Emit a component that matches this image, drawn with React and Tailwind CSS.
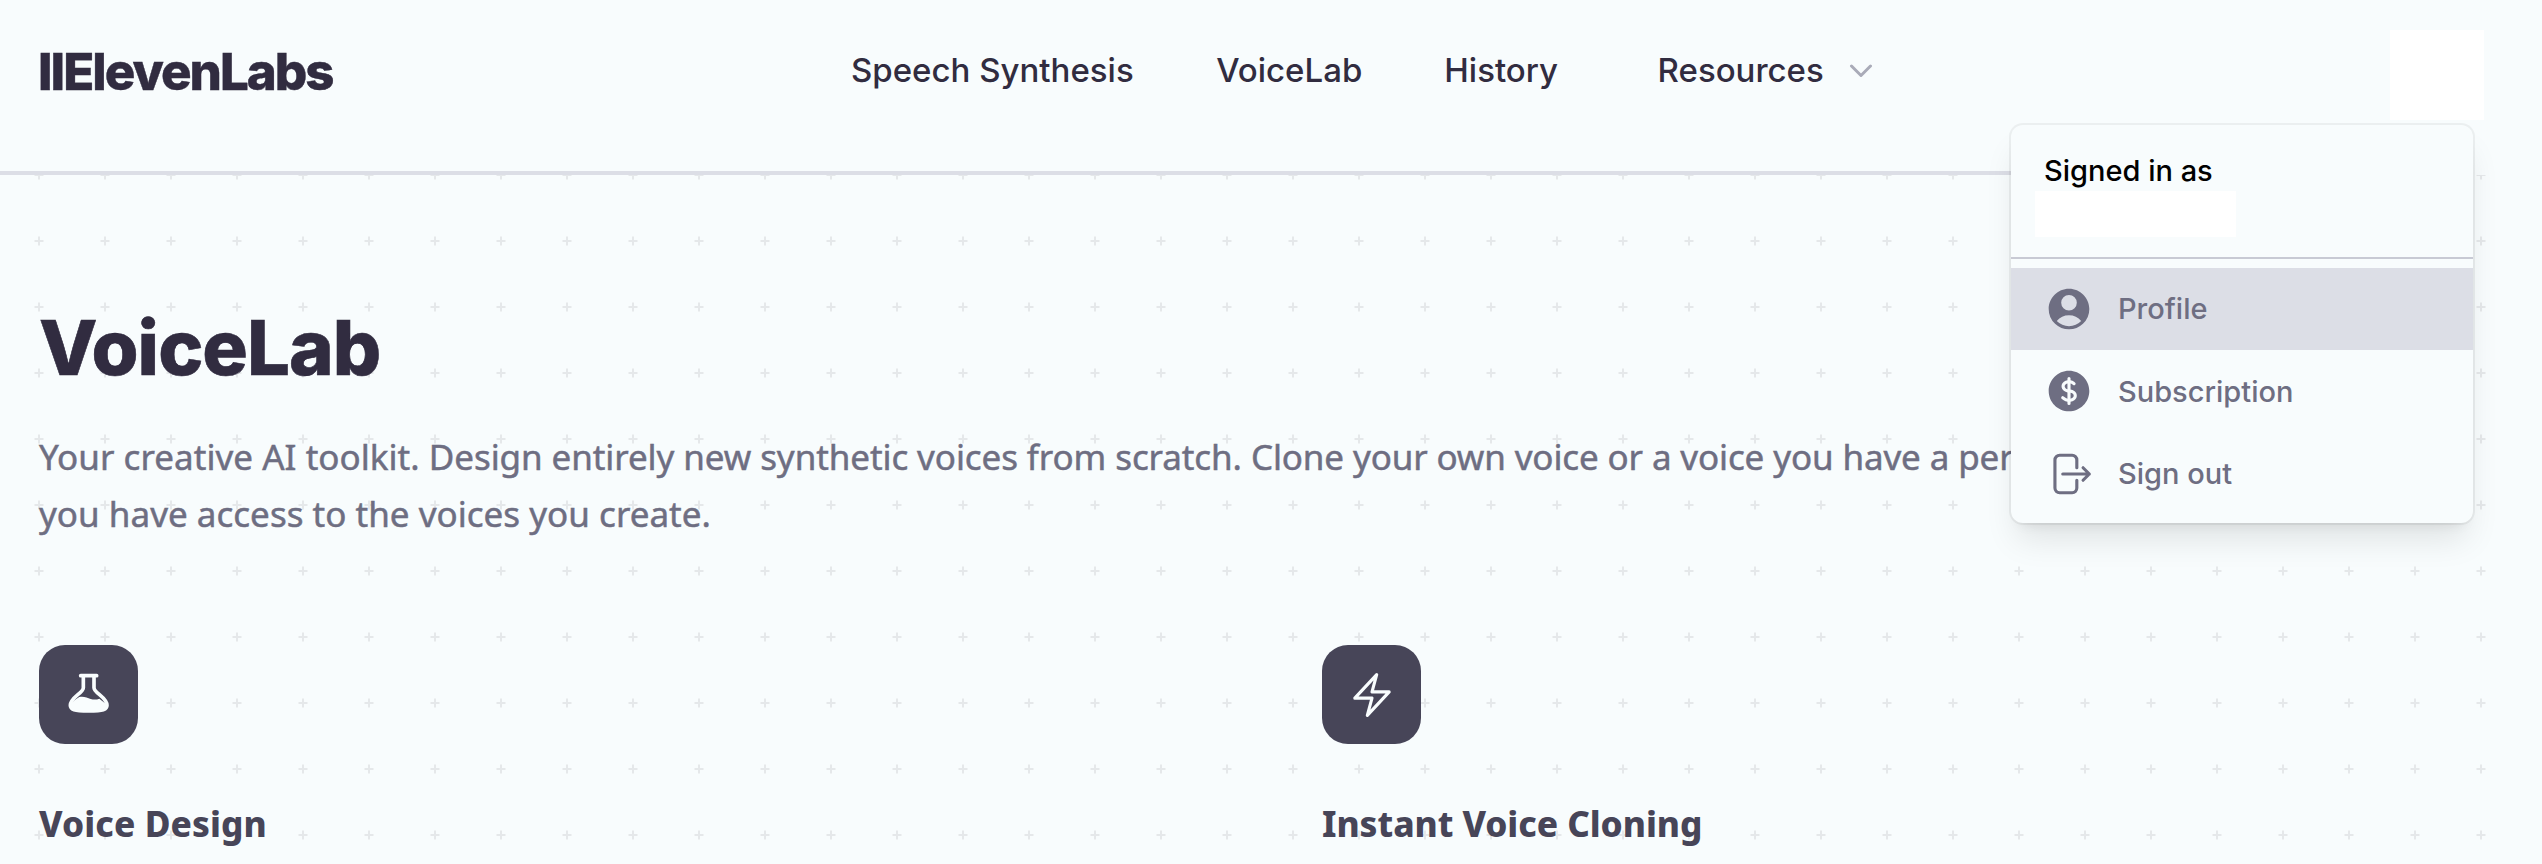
import {
  HiUserCircle,
  HiCurrencyDollar,
  HiOutlineArrowRightOnRectangle,
  HiOutlineBolt,
} from "react-icons/hi2";

const accountLinks = [
  { label: "Profile", Icon: HiUserCircle, active: true },
  { label: "Subscription", Icon: HiCurrencyDollar, active: false },
  { label: "Sign out", Icon: HiOutlineArrowRightOnRectangle, active: false },
];

function PlusPattern() {
  return (
    <svg className="pointer-events-none absolute inset-0 h-full w-full" aria-hidden="true">
      <defs>
        <pattern id="plus" width="66" height="66" x="6" y="-33" patternUnits="userSpaceOnUse">
          <path d="M28.500 33h9M33 28.500v9" stroke="#e5e8ea" strokeWidth="2" />
        </pattern>
      </defs>
      <rect width="100%" height="100%" fill="url(#plus)" />
    </svg>
  );
}

function Flask() {
  return (
    <svg viewBox="0 3 162 162" className="size-[54px]" fill="none" aria-hidden="true">
      <path
        d="M56 26H104"
        stroke="#f9fdfe"
        strokeWidth="11"
        strokeLinecap="round"
      />
      <path
        d="M64 26V62C64 78 25 91 25 115C25 128 36 131.500 80 131.500C124 131.500 135 128 135 115C135 91 96 78 96 62V26"
        stroke="#f9fdfe"
        strokeWidth="11"
      />
      <path
        d="M52 90C66 87 76 93 86 96C96 98.500 104 98 112 95L133 112C133 127 125 131 80 131C35 131 27 127 27 113C31 103 40 97 52 90Z"
        fill="#f9fdfe"
      />
    </svg>
  );
}

function Header() {
  return (
    <header className="flex flex-col bg-[#f8fcfd]">
      <div className="flex h-[171px] items-start pr-[58px] pl-[38px]">
        <div className="flex h-[144px] w-[813px] items-center text-[51px] font-extrabold tracking-[-2px] text-[#312c40] [-webkit-text-stroke:0.4px]">
          IIElevenLabs
        </div>
        <nav className="flex h-[141px] items-center text-[33px] font-medium text-[#312c40]">
          <a>Speech Synthesis</a>
          <a className="ml-[82.500px]">VoiceLab</a>
          <a className="ml-[82px]">History</a>
          <button className="ml-[99.500px] flex items-center gap-[25px]">
            Resources
            <svg className="mt-px h-[14px] w-[24px]" viewBox="0 0 24 14" fill="none" aria-hidden="true">
              <path
                d="M2.500 2L12 11.500L21.500 2"
                stroke="#a9abb8"
                strokeWidth="3"
                strokeLinecap="round"
                strokeLinejoin="round"
              />
            </svg>
          </button>
        </nav>
        <div className="mt-[30px] ml-auto h-[90px] w-[94px] bg-white" />
      </div>
      <div className="h-1 w-[2240px] bg-[#dcdee6]" />
    </header>
  );
}

function AccountMenu() {
  return (
    <div className="absolute top-[125px] left-[2011px] h-[398px] w-[462px] rounded-[12px] bg-[#f8fcfd] shadow-[0_0_0_2px_rgba(0,0,0,0.05),0_22px_33px_-6px_rgba(0,0,0,0.1),0_9px_13px_-9px_rgba(0,0,0,0.1)]">
      <div className="h-[134px] border-b-2 border-[#c8cad4] pt-[24px]">
        <p className="pl-[33px] text-[29px] leading-[43px] font-medium text-black">Signed in as</p>
        <div className="-mt-px ml-[24px] h-[46px] w-[201px] bg-white" />
      </div>
      <ul className="pt-[9px]">
        {accountLinks.map(({ label, Icon, active }) => (
          <li
            key={label}
            className={
              active
                ? "flex h-[82px] items-center gap-[24px] bg-[#dcdee6] pl-[33px]"
                : "flex h-[82.500px] items-center gap-[24px] pl-[33px]"
            }
          >
            <Icon className="size-[50px] text-[#6e6e82]" />
            <span className="text-[29px] font-medium text-[#6e6e82]">{label}</span>
          </li>
        ))}
      </ul>
    </div>
  );
}

function IconTile({ children }) {
  return (
    <div className="flex size-[99px] items-center justify-center rounded-[26px] bg-[#474558]">
      {children}
    </div>
  );
}

export default function App() {
  return (
    <div className="relative flex h-[864px] w-full flex-col overflow-hidden bg-[#f8fcfd] font-['Inter',sans-serif]">
      <Header />
      <main className="relative flex-1">
        <PlusPattern />
        <div className="relative px-[39px] pt-[130px]">
          <h1 className="text-[76px] leading-[84px] font-extrabold tracking-[-1px] text-[#312c40] [-webkit-text-stroke:0.6px]">
            VoiceLab
          </h1>
          <p className="mt-[39px] font-['Noto_Sans',sans-serif] text-[35px] leading-[57px] whitespace-nowrap text-[#6e6e82] [-webkit-text-stroke:0.5px]">
            <span className="tracking-[0.04px]">Your creative AI toolkit. </span>
            <span className="tracking-[-0.09px]">
              Design entirely new synthetic voices from scratch.{" "}
            </span>
            <span className="tracking-[-0.13px]">
              Clone your own voice or a voice you have a per
            </span>
            <br />
            <span className="tracking-[0.02px]">you have access to the voices you create.</span>
          </p>
          <div className="mt-[103px] grid grid-cols-2 gap-[102px] font-['Noto_Sans',sans-serif] text-[35.2px] leading-[48px] font-extrabold text-[#474558]">
            <section>
              <IconTile>
                <Flask />
              </IconTile>
              <h2 className="mt-[55px] tracking-[0.1px]">Voice Design</h2>
            </section>
            <section>
              <IconTile>
                <HiOutlineBolt className="size-[50px] text-[#f9fdfe]" />
              </IconTile>
              <h2 className="mt-[55px] tracking-[-0.05px]">Instant Voice Cloning</h2>
            </section>
          </div>
        </div>
      </main>
      <AccountMenu />
    </div>
  );
}
